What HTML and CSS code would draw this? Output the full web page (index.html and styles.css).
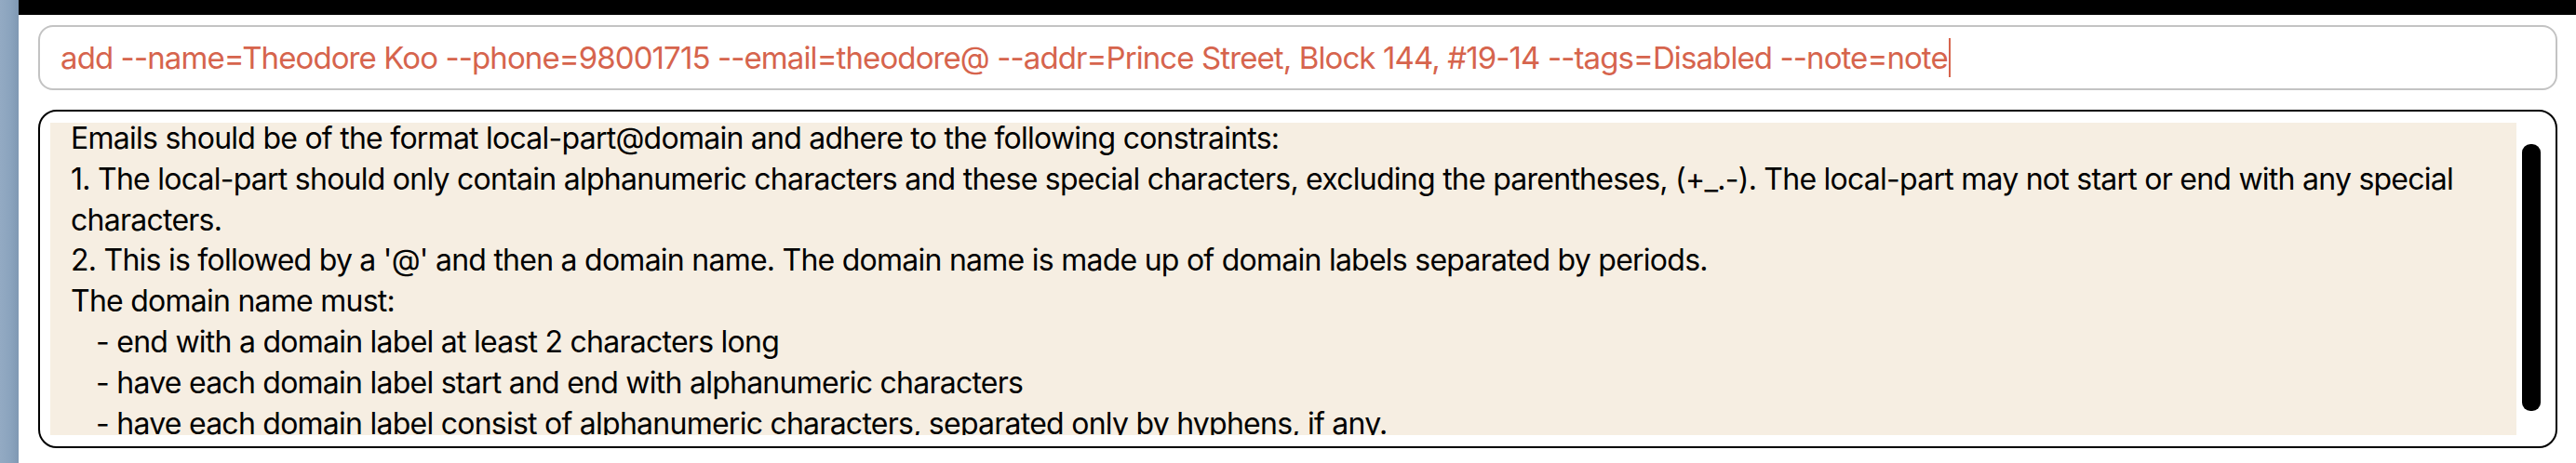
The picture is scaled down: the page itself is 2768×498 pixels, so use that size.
FILE: index.html
```html
<!DOCTYPE html>
<html lang="en">
<head>
<meta charset="utf-8">
<title>Address Book</title>
<link rel="stylesheet" href="styles.css">
</head>
<body>
<div class="app">
  <div class="sidebar"></div>
  <div class="main">
    <div class="topbar"></div>
    <div class="command-box">
      <span class="command-text">add --name=Theodore Koo --phone=98001715 --email=theodore@ --addr=Prince Street, Block 144, #19-14 --tags=Disabled --note=note</span><span class="caret"></span>
    </div>
    <div class="result-box">
      <div class="result-area">
        <div class="result-text">
          <p class="line">Emails should be of the format local-part@domain and adhere to the following constraints:</p>
          <p class="line">1. The local-part should only contain alphanumeric characters and these special characters, excluding the parentheses, (+_.-). The local-part may not start or end with any special<br>characters.</p>
          <p class="line">2. This is followed by a '@' and then a domain name. The domain name is made up of domain labels separated by periods.</p>
          <p class="line">The domain name must:</p>
          <p class="line indent">- end with a domain label at least 2 characters long</p>
          <p class="line indent">- have each domain label start and end with alphanumeric characters</p>
          <p class="line indent">- have each domain label consist of alphanumeric characters, separated only by hyphens, if any.</p>
        </div>
      </div>
      <div class="scrollbar"><div class="thumb"></div></div>
    </div>
  </div>
</div>
</body>
</html>
```

FILE: styles.css
```css
html, body {
  margin: 0;
  padding: 0;
  background: #ffffff;
}

.app {
  display: flex;
  width: 2768px;
  height: 498px;
  overflow: hidden;
}

.sidebar {
  width: 20px;
  flex: none;
  background: linear-gradient(90deg, #93aac3 0%, #8aa3bd 60%, #7f98b3 100%);
}

.main {
  flex: 1;
  display: flex;
  flex-direction: column;
  background: #ffffff;
}

.topbar {
  height: 16px;
  background: #000000;
}

.command-box {
  margin: 11px 20px 0 21px;
  height: 70px;
  box-sizing: border-box;
  border: 2px solid #c3c3c3;
  border-radius: 16px;
  display: flex;
  align-items: center;
  padding-left: 22px;
  font-family: "Inter", "Liberation Sans", sans-serif;
  font-size: 33px;
  letter-spacing: -0.9px;
  color: #d6644d;
  white-space: nowrap;
  overflow: hidden;
}

.caret {
  display: inline-block;
  width: 2px;
  height: 42px;
  background: #d6644d;
  margin-left: 1px;
}

.result-box {
  margin: 21px 20px 0 21px;
  height: 364px;
  box-sizing: border-box;
  border: 2px solid #000000;
  border-radius: 20px;
  display: flex;
  padding: 12px 16px 12px 11px;
  gap: 6px;
}

.result-area {
  width: 2650px;
  flex: none;
  background: #f6eee2;
  overflow: hidden;
}

.result-text {
  margin-top: -5px;
  padding: 0 0 0 22px;
  font-family: "Inter", "Liberation Sans", sans-serif;
  font-size: 32px;
  line-height: 43.8px;
  color: #000000;
  letter-spacing: -0.75px;
  white-space: nowrap;
}

.line {
  margin: 0;
}

.indent {
  padding-left: 27px;
}

.scrollbar {
  width: 20px;
  flex: none;
  display: flex;
  flex-direction: column;
  padding: 23px 0 26px;
}

.thumb {
  flex: 1;
  background: #000000;
  border-radius: 9px;
}
```
